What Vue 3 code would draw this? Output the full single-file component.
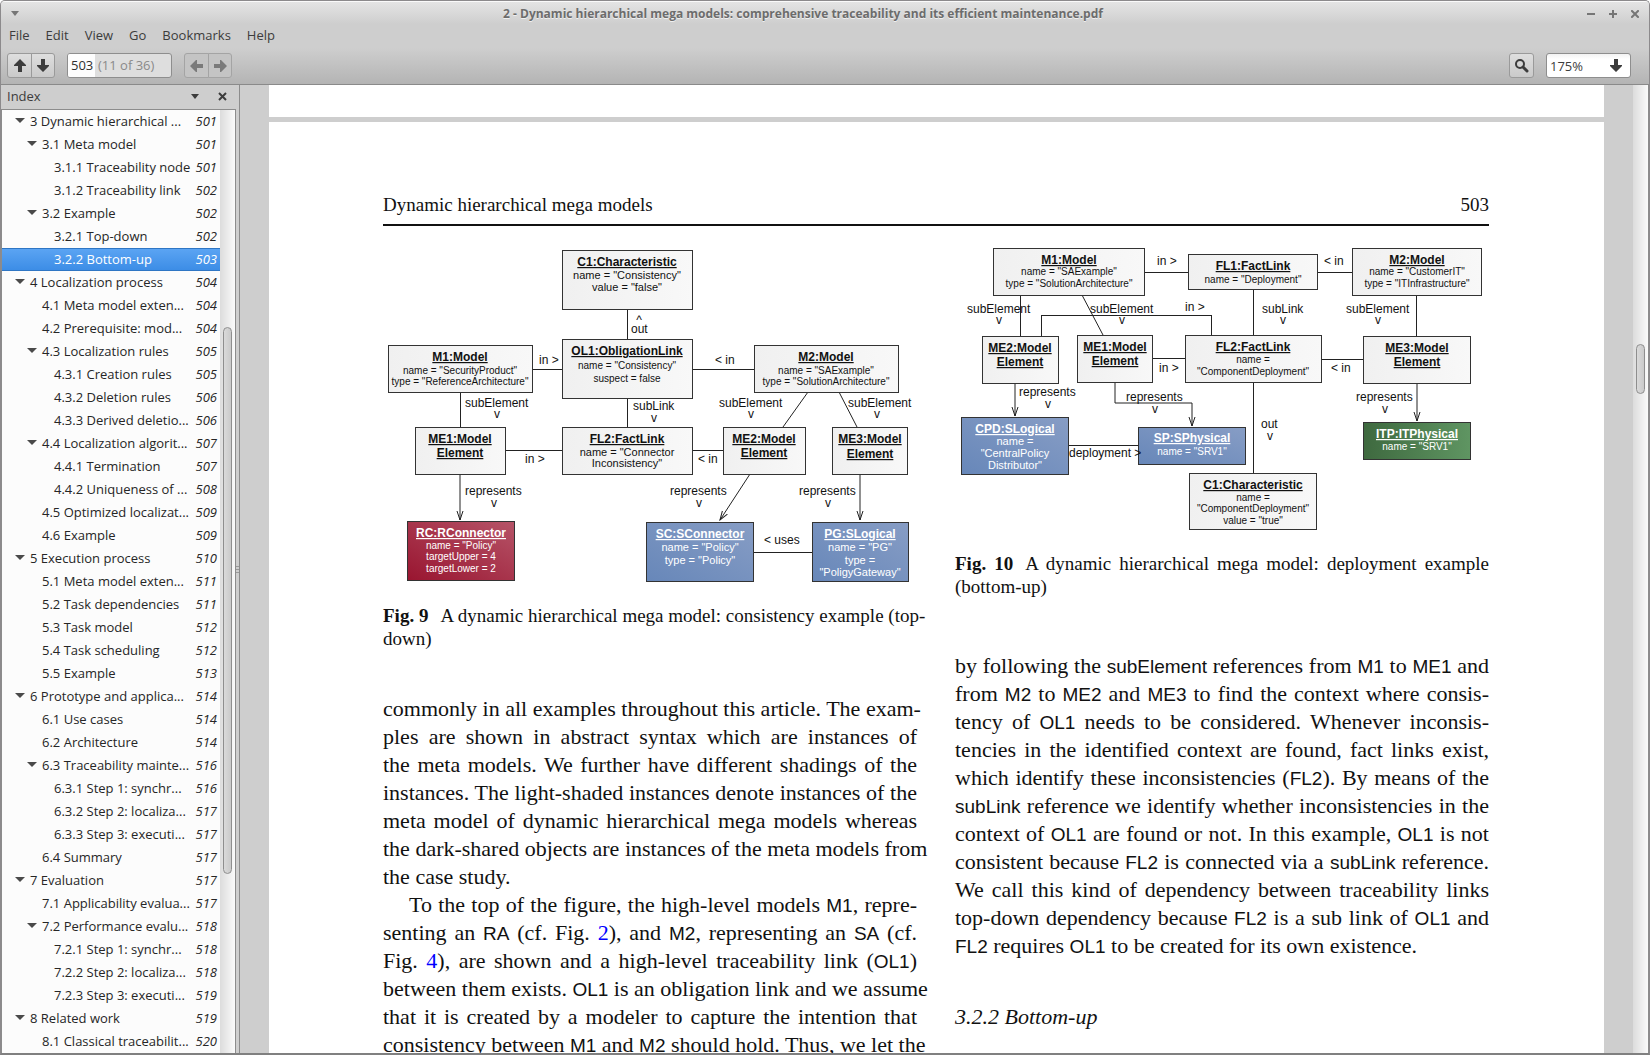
<script setup>
import { ref } from 'vue'

const menus = ['File', 'Edit', 'View', 'Go', 'Bookmarks', 'Help']
const pageNumber = ref('503')
const zoom = ref('175%')

// [depth, title, page, has children]
const outline = [
  [1, '3 Dynamic hierarchical ...', 501, true],
  [2, '3.1 Meta model', 501, true],
  [3, '3.1.1 Traceability node', 501],
  [3, '3.1.2 Traceability link', 502],
  [2, '3.2 Example', 502, true],
  [3, '3.2.1 Top-down', 502],
  [3, '3.2.2 Bottom-up', 503],
  [1, '4 Localization process', 504, true],
  [2, '4.1 Meta model exten...', 504],
  [2, '4.2 Prerequisite: mod...', 504],
  [2, '4.3 Localization rules', 505, true],
  [3, '4.3.1 Creation rules', 505],
  [3, '4.3.2 Deletion rules', 506],
  [3, '4.3.3 Derived deletio...', 506],
  [2, '4.4 Localization algorit...', 507, true],
  [3, '4.4.1 Termination', 507],
  [3, '4.4.2 Uniqueness of ...', 508],
  [2, '4.5 Optimized localizat...', 509],
  [2, '4.6 Example', 509],
  [1, '5 Execution process', 510, true],
  [2, '5.1 Meta model exten...', 511],
  [2, '5.2 Task dependencies', 511],
  [2, '5.3 Task model', 512],
  [2, '5.4 Task scheduling', 512],
  [2, '5.5 Example', 513],
  [1, '6 Prototype and applica...', 514, true],
  [2, '6.1 Use cases', 514],
  [2, '6.2 Architecture', 514],
  [2, '6.3 Traceability mainte...', 516, true],
  [3, '6.3.1 Step 1: synchr...', 516],
  [3, '6.3.2 Step 2: localiza...', 517],
  [3, '6.3.3 Step 3: executi...', 517],
  [2, '6.4 Summary', 517],
  [1, '7 Evaluation', 517, true],
  [2, '7.1 Applicability evalua...', 517],
  [2, '7.2 Performance evalu...', 518, true],
  [3, '7.2.1 Step 1: synchr...', 518],
  [3, '7.2.2 Step 2: localiza...', 518],
  [3, '7.2.3 Step 3: executi...', 519],
  [1, '8 Related work', 519, true],
  [2, '8.1 Classical traceabilit...', 520],
].map(([depth, title, page, open]) => ({ depth, title, page, open }))
const selected = ref('3.2.2 Bottom-up')

// `x` marks a model name, [x] a cross reference
const parse = (line) =>
  line
    .split(/(`[^`]+`|\[[^\]]+\])/)
    .filter(Boolean)
    .map((s) =>
      s[0] === '`' ? { kind: 'code', text: s.slice(1, -1) }
      : s[0] === '[' ? { kind: 'ref', text: s.slice(1, -1) }
      : { kind: 'text', text: s })

const leftParagraphs = [
  [
    'commonly in all examples throughout this article. The exam-',
    'ples are shown in abstract syntax which are instances of',
    'the meta models. We further have different shadings of the',
    'instances. The light-shaded instances denote instances of the',
    'meta model of dynamic hierarchical mega models whereas',
    'the dark-shared objects are instances of the meta models from',
    'the case study.',
  ],
  [
    'To the top of the figure, the high-level models `M1`, repre-',
    'senting an `RA` (cf. Fig. [2]), and `M2`, representing an `SA` (cf.',
    'Fig. [4]), are shown and a high-level traceability link (`OL1`)',
    'between them exists. `OL1` is an obligation link and we assume',
    'that it is created by a modeler to capture the intention that',
    'consistency between `M1` and `M2` should hold. Thus, we let the',
  ],
].map((p) => p.map(parse))

const rightParagraphs = [
  [
    'by following the `subElement` references from `M1` to `ME1` and',
    'from `M2` to `ME2` and `ME3` to find the context where consis-',
    'tency of `OL1` needs to be considered. Whenever inconsis-',
    'tencies in the identified context are found, fact links exist,',
    'which identify these inconsistencies (`FL2`). By means of the',
    '`subLink` reference we identify whether inconsistencies in the',
    'context of `OL1` are found or not. In this example, `OL1` is not',
    'consistent because `FL2` is connected via a `subLink` reference.',
    'We call this kind of dependency between traceability links',
    'top-down dependency because `FL2` is a sub link of `OL1` and',
    '`FL2` requires `OL1` to be created for its own existence.',
  ],
].map((p) => p.map(parse))

// node: x, y, w, h, tone, attribute size, titles [text, y], attributes [text, y]
const node = (x, y, w, h, tone, size, titles, attrs = []) => ({ x, y, w, h, tone, size, titles, attrs, cx: x + Math.round(w / 2) })

const figures = [
  {
    id: 'fig9',
    title: 'Consistency example',
    height: 340,
    nodes: [
      node(179, 5, 130, 59, 'light', 'm', [['C1:Characteristic', 21]], [['name = "Consistency"', 34], ['value = "false"', 46]]),
      node(179, 94, 130, 59, 'light', 's', [['OL1:ObligationLink', 110]], [['name = "Consistency"', 124], ['suspect = false', 137]]),
      node(5, 100, 144, 47, 'light', 's', [['M1:Model', 116]], [['name = "SecurityProduct"', 129], ['type = "ReferenceArchitecture"', 140]]),
      node(371, 100, 144, 47, 'light', 's', [['M2:Model', 116]], [['name = "SAExample"', 129], ['type = "SolutionArchitecture"', 140]]),
      node(32, 182, 90, 47, 'light', 's', [['ME1:Model', 198], ['Element', 212]]),
      node(179, 182, 130, 47, 'light', 'm', [['FL2:FactLink', 198]], [['name = "Connector', 211], ['Inconsistency"', 222]]),
      node(340, 182, 82, 47, 'light', 's', [['ME2:Model', 198], ['Element', 212]]),
      node(449, 182, 75, 47, 'light', 's', [['ME3:Model', 198], ['Element', 213]]),
      node(24, 276, 107, 59, 'red', 's', [['RC:RConnector', 292]], [['name = "Policy"', 304], ['targetUpper = 4', 315], ['targetLower = 2', 327]]),
      node(263, 277, 107, 59, 'blue', 'm', [['SC:SConnector', 293]], [['name = "Policy"', 306], ['type = "Policy"', 319]]),
      node(429, 277, 96, 59, 'blue', 'm', [['PG:SLogical', 293]], [['name = "PG"', 306], ['type =', 319], ['"PoligyGateway"', 331]]),
    ],
    straight: [
      '244,64 244,94', '244,153 244,182', '149,124 179,124', '309,124 371,124', '77,147 77,182',
      '122,205 179,205', '309,205 340,205', '370,307 429,307',
    ],
    slanted: ['425,147 400,182', '456,147 474,182'],
    arrows: ['77,229 77,275', '367,229 337,275', '477,229 477,275'],
    labels: [
      ['out', 248, 88], ['in >', 156, 119], ['subElement', 82, 162], ['subLink', 250, 165], ['< in', 332, 119],
      ['subElement', 336, 162], ['subElement', 465, 162], ['in >', 142, 218], ['< in', 315, 218],
      ['represents', 82, 250], ['represents', 287, 250], ['represents', 416, 250], ['< uses', 381, 299],
    ],
    marks: [['^', 256, 79], ['v', 114, 173], ['v', 271, 177], ['v', 368, 173], ['v', 494, 173], ['v', 111, 262], ['v', 316, 262], ['v', 445, 262]],
  },
  {
    id: 'fig10',
    title: 'Deployment example',
    height: 288,
    nodes: [
      node(38, 3, 151, 47, 'light', 's', [['M1:Model', 19]], [['name = "SAExample"', 30], ['type = "SolutionArchitecture"', 42]]),
      node(233, 9, 129, 35, 'light', 's', [['FL1:FactLink', 25]], [['name = "Deployment"', 38]]),
      node(397, 3, 129, 47, 'light', 's', [['M2:Model', 19]], [['name = "CustomerIT"', 30], ['type = "ITInfrastructure"', 42]]),
      node(27, 91, 76, 47, 'light', 's', [['ME2:Model', 107], ['Element', 121]]),
      node(122, 90, 75, 47, 'light', 's', [['ME1:Model', 106], ['Element', 120]]),
      node(230, 90, 136, 47, 'light', 's', [['FL2:FactLink', 106]], [['name =', 118], ['"ComponentDeployment"', 130]]),
      node(408, 91, 107, 47, 'light', 's', [['ME3:Model', 107], ['Element', 121]]),
      node(6, 172, 107, 57, 'blue', 'm', [['CPD:SLogical', 188]], [['name =', 200], ['"CentralPolicy', 212], ['Distributor"', 224]]),
      node(183, 182, 107, 37, 'blue', 's', [['SP:SPhysical', 197]], [['name = "SRV1"', 210]]),
      node(408, 177, 107, 37, 'green', 's', [['ITP:ITPhysical', 193]], [['name = "SRV1"', 205]]),
      node(234, 228, 127, 56, 'light', 's', [['C1:Characteristic', 244]], [['name =', 256], ['"ComponentDeployment"', 267], ['value = "true"', 279]]),
    ],
    straight: [
      '189,27 233,27', '362,27 397,27', '65,50 65,91', '86,91 86,70 256,70 256,90', '298,44 298,90',
      '197,113 230,113', '366,114 408,114', '461,50 461,91', '113,200 183,200', '298,137 298,228',
    ],
    slanted: ['127,50 148,90'],
    arrows: ['60,138 60,171', '160,137 160,158 237,158 237,181', '462,138 462,176'],
    labels: [
      ['in >', 202, 20], ['< in', 369, 20], ['subElement', 12, 68], ['subElement', 135, 68], ['in >', 230, 66],
      ['subLink', 307, 68], ['subElement', 391, 68], ['in >', 204, 127], ['< in', 376, 127], ['represents', 64, 151],
      ['represents', 171, 156], ['represents', 401, 156], ['out', 306, 183], ['deployment >', 114, 212],
    ],
    marks: [['v', 44, 79], ['v', 167, 79], ['v', 328, 79], ['v', 423, 79], ['v', 93, 163], ['v', 200, 168], ['v', 430, 168], ['v', 315, 195]],
  },
]

const columns = [
  { figure: figures[0], paragraphs: leftParagraphs, number: 'Fig. 9', caption: ['A dynamic hierarchical mega model: consistency example (top-', 'down)'], side: 'left' },
  { figure: figures[1], paragraphs: rightParagraphs, number: 'Fig. 10', caption: ['A dynamic hierarchical mega model: deployment example', '(bottom-up)'], side: 'right', heading: '3.2.2 Bottom-up' },
]
</script>

<template>
  <div class="window">
    <header class="chrome">
      <div class="titlebar">
        <button class="plain window-menu" aria-label="Window menu">
          <svg width="8" height="5" viewBox="0 0 8 5"><path d="M0 0h8L4 5z" /></svg>
        </button>
        <h1>2 - Dynamic hierarchical mega models: comprehensive traceability and its efficient maintenance.pdf</h1>
        <div class="window-buttons">
          <button class="plain" aria-label="Minimize"><svg width="8" height="8" viewBox="0 0 8 8"><path d="M0 3h8v2H0z" /></svg></button>
          <button class="plain" aria-label="Maximize"><svg width="8" height="8" viewBox="0 0 8 8"><path d="M0 3h3V0h2v3h3v2H5v3H3V5H0z" /></svg></button>
          <button class="plain" aria-label="Close"><svg width="8" height="8" viewBox="0 0 8 8"><path d="M1 1l6 6M7 1L1 7" stroke="currentColor" stroke-width="2" stroke-linecap="square" /></svg></button>
        </div>
      </div>

      <nav class="menubar" aria-label="Menu bar">
        <button v-for="m in menus" :key="m" class="plain">{{ m }}</button>
      </nav>

      <div class="toolbar">
        <div class="pair">
          <button class="tool" aria-label="Previous page">
            <svg width="12" height="13" viewBox="0 0 12 13"><path d="M6 0l6 6v1H8v6H4V7H0V6z" /></svg>
          </button>
          <button class="tool" aria-label="Next page">
            <svg width="12" height="13" viewBox="0 0 12 13"><path d="M6 13l6-6V6H8V0H4v6H0v1z" /></svg>
          </button>
        </div>
        <label class="page-field">
          <input v-model="pageNumber" aria-label="Page" />
          <span>(11 of 36)</span>
        </label>
        <div class="pair muted">
          <button class="tool" aria-label="Back">
            <svg width="13" height="12" viewBox="0 0 13 12"><path d="M0 6l6-6h1v4h6v4H7v4H6z" /></svg>
          </button>
          <button class="tool" aria-label="Forward">
            <svg width="13" height="12" viewBox="0 0 13 12"><path d="M13 6L7 0H6v4H0v4h6v4h1z" /></svg>
          </button>
        </div>
        <button class="tool search" aria-label="Find">
          <svg width="15" height="15" viewBox="0 0 15 15" fill="none" stroke="currentColor"><circle cx="6" cy="6" r="4" fill="none" stroke-width="2" /><path d="M9 9l4 4" stroke-width="3" stroke-linecap="round" /></svg>
        </button>
        <div class="zoom">
          <select v-model="zoom" aria-label="Zoom"><option>175%</option></select>
          <svg width="12" height="13" viewBox="0 0 12 13"><path d="M6 13l6-6V6H8V0H4v6H0v1z" /></svg>
        </div>
      </div>
    </header>

    <main class="body">
      <aside class="sidebar">
        <div class="side-head">
          <span>Index</span>
          <button class="plain" aria-label="Choose pane"><svg width="8" height="5" viewBox="0 0 8 5"><path d="M0 0h8L4 5z" /></svg></button>
          <button class="plain" aria-label="Close pane"><svg width="9" height="9" viewBox="0 0 9 9"><path d="M1 1l7 7M8 1L1 8" stroke="currentColor" stroke-width="2" /></svg></button>
        </div>
        <div class="tree-frame">
          <ul class="tree">
            <li v-for="o in outline" :key="o.title" :class="['depth-' + o.depth, { selected: o.title === selected }]">
              <svg class="expander" :class="{ leaf: !o.open }" width="10" height="5" viewBox="0 0 10 5"><path d="M0 0h10L5 5z" /></svg>
              <a href="#" @click.prevent="selected = o.title">{{ o.title }}</a>
              <em>{{ o.page }}</em>
            </li>
          </ul>
          <div class="track side-track"><i class="thumb"></i></div>
        </div>
      </aside>
      <div class="splitter"><i></i><i></i><i></i></div>

      <section class="viewer">
        <div class="pages">
          <div class="sheet previous"></div>
          <article class="sheet current">
            <div class="running-head"><span>Dynamic hierarchical mega models</span><span>503</span></div>
            <div class="columns">
              <div v-for="c in columns" :key="c.side" :class="['column', c.side]">
                <figure>
                  <svg class="diagram" :viewBox="'0 0 534 ' + c.figure.height" role="img" :aria-label="c.figure.title">
                    <defs>
                      <linearGradient :id="c.figure.id + 'light'" x1="0" y1="0" x2="1" y2="0"><stop offset="0" stop-color="#f0f0f0" /><stop offset="1" stop-color="#f8f8f8" /></linearGradient>
                      <linearGradient :id="c.figure.id + 'blue'" x1="0" y1="1" x2="1" y2="0"><stop offset="0" stop-color="#6787b9" /><stop offset="1" stop-color="#879dc5" /></linearGradient>
                      <linearGradient :id="c.figure.id + 'red'" x1="0" y1="1" x2="1" y2="0"><stop offset="0" stop-color="#991530" /><stop offset="1" stop-color="#b65468" /></linearGradient>
                      <linearGradient :id="c.figure.id + 'green'" x1="0" y1="0" x2="1" y2="0"><stop offset="0" stop-color="#3e693f" /><stop offset="1" stop-color="#5f9562" /></linearGradient>
                      <marker :id="c.figure.id + 'arrow'" markerWidth="10" markerHeight="8" refX="9" refY="4" orient="auto" markerUnits="userSpaceOnUse"><path d="M0 1l9 3-9 3" class="edge" /></marker>
                    </defs>
                    <polyline v-for="l in c.figure.straight" :key="l" :points="l" class="edge crisp" />
                    <polyline v-for="l in c.figure.slanted" :key="l" :points="l" class="edge" />
                    <polyline v-for="l in c.figure.arrows" :key="l" :points="l" class="edge" :marker-end="'url(#' + c.figure.id + 'arrow)'" />
                    <g v-for="n in c.figure.nodes" :key="n.titles[0][0]" :class="['node', n.tone, n.size]">
                      <rect :x="n.x" :y="n.y" :width="n.w" :height="n.h" :fill="'url(#' + c.figure.id + n.tone + ')'" />
                      <text v-for="t in n.titles" :key="t[0]" class="node-title" :x="n.cx" :y="t[1]">{{ t[0] }}</text>
                      <text v-for="t in n.attrs" :key="t[0]" class="node-attr" :x="n.cx" :y="t[1]">{{ t[0] }}</text>
                    </g>
                    <text v-for="(l, i) in c.figure.labels" :key="i" class="edge-label" :x="l[1]" :y="l[2]">{{ l[0] }}</text>
                    <text v-for="(m, i) in c.figure.marks" :key="'m' + i" class="edge-label mark" :x="m[1]" :y="m[2]">{{ m[0] }}</text>
                  </svg>
                  <figcaption>
                    <span class="line"><b>{{ c.number }}</b>{{ c.caption[0] }}</span>
                    <span class="line">{{ c.caption[1] }}</span>
                  </figcaption>
                </figure>
                <div class="prose">
                  <p v-for="(p, i) in c.paragraphs" :key="i" :class="{ indented: i > 0 }">
                    <span v-for="(line, j) in p" :key="j" class="line"><template v-for="(s, k) in line" :key="k"><code v-if="s.kind === 'code'">{{ s.text }}</code><a v-else-if="s.kind === 'ref'" href="#">{{ s.text }}</a><template v-else>{{ s.text }}</template></template></span>
                  </p>
                </div>
                <h2 v-if="c.heading">{{ c.heading }}</h2>
              </div>
            </div>
          </article>
        </div>
        <div class="track view-track"><i class="thumb"></i></div>
      </section>
    </main>
  </div>
</template>

<style>
body { margin: 0; background: #fff; }
</style>

<style scoped>
* { box-sizing: border-box; }
.window {
  display: flex;
  flex-direction: column;
  height: 100vh;
  overflow: hidden;
  border: 1px solid #8c8a8c;
  border-bottom: 2px solid #808080;
  border-radius: 5px 5px 0 0;
  background: #cecece;
  font: 13px/18px "Open Sans", "Noto Sans", sans-serif;
  color: #3c3c3c;
}
button, input, select { font: inherit; color: inherit; }
svg { display: block; fill: currentColor; }
.plain { border: 0; padding: 0; background: none; }

.chrome {
  flex: none;
  border-top: 1px solid #fafafa;
  border-bottom: 1px solid #8a8a8a;
  background: linear-gradient(#e4e4e4, #cecece 22px, #cecece 46px, #b4b4b4);
}
.titlebar { display: flex; align-items: center; height: 23px; padding: 0 10px; color: #767676; }
.titlebar h1 {
  flex: 1;
  margin: 0;
  text-align: center;
  white-space: nowrap;
  font: bold 12px/18px "Open Sans", "Noto Sans", sans-serif;
  color: #6c6c6c;
  text-shadow: 0 1px 0 #f0f0f0;
}
.window-buttons { display: flex; gap: 14px; }
.menubar { display: flex; align-items: flex-start; gap: 16px; height: 24px; padding: 1px 8px 0; }
.toolbar { display: flex; align-items: center; height: 35px; padding: 0 18px 2px 6px; }
.pair { display: flex; }
.tool {
  display: grid;
  place-items: center;
  width: 25px;
  height: 25px;
  padding: 0;
  border: 1px solid #9a9a9a;
  border-radius: 3px;
  background: linear-gradient(#dedede, #cacaca);
  color: #3c3c3c;
}
.pair .tool:first-child { border-radius: 3px 0 0 3px; }
.pair .tool:last-child { margin-left: -1px; width: 24px; border-radius: 0 3px 3px 0; }
.muted .tool { background: #c4c4c4; color: #7a7a7a; border-color: #a4a4a4; }
.page-field {
  display: flex;
  width: 105px;
  height: 25px;
  margin: 0 12px;
  border: 1px solid #8e8e8e;
  border-radius: 3px;
  background: #dedede;
  line-height: 23px;
  color: #8a8a8a;
  overflow: hidden;
}
.page-field input { width: 27px; padding: 0 0 0 3px; border: 0; background: #fdfdfd; color: #303030; }
.page-field span { padding-left: 3px; white-space: nowrap; }
.search { margin-left: auto; }
.zoom { position: relative; margin-left: 12px; }
.zoom select {
  width: 85px;
  height: 25px;
  padding: 0 3px;
  border: 1px solid #8e8e8e;
  border-radius: 3px;
  background: linear-gradient(#f2f2f2, #fff 5px);
  appearance: none;
}
.zoom svg { position: absolute; right: 9px; top: 6px; pointer-events: none; }

.body { display: flex; flex: 1; min-height: 0; }
.sidebar { display: flex; flex-direction: column; width: 235px; flex: none; }
.side-head { display: flex; align-items: center; flex: none; height: 24px; padding: 0 9px 2px 6px; }
.side-head span { flex: 1; }
.side-head button + button { margin-left: 19px; }
.tree-frame { display: flex; flex: 1; min-height: 0; border: 1px solid #8c8c8c; border-bottom: 0; background: #fcfcfc; }
.tree { flex: 1; min-width: 0; margin: 0; padding: 0; list-style: none; overflow: hidden; color: #262626; }
.tree li { display: flex; align-items: center; height: 23px; padding-right: 3px; padding-bottom: 2px; white-space: nowrap; }
.tree .expander { flex: none; margin-right: 5px; color: #4a4a4a; }
.tree .leaf { visibility: hidden; }
.depth-1 { padding-left: 13px; }
.depth-2 { padding-left: 25px; }
.depth-3 { padding-left: 37px; }
.tree a { flex: 1; color: inherit; text-decoration: none; }
.tree .selected { border: solid #2f76c4; border-width: 1px 0; background: linear-gradient(#5ba4f3, #3c8de6); color: #fff; }
.track { display: flex; flex-direction: column; align-items: center; flex: none; width: 15px; background: linear-gradient(90deg, #dcdcdc, #fafafa); }
.thumb { width: 9px; border: 1px solid #8e8e8e; border-radius: 5px; background: linear-gradient(90deg, #dadada, #cacaca); }
.side-track .thumb { margin-top: 217px; height: 58%; }
.view-track .thumb { margin-top: 259px; height: 50px; }
.splitter { display: flex; flex-direction: column; justify-content: center; gap: 2px; flex: none; width: 4px; border-right: 1px solid #8c8c8c; }
.splitter i { height: 1px; background: #9a9a9a; }

.viewer { display: flex; flex: 1; min-width: 0; border-right: 1px solid #8c8c8c; }
.pages { display: flex; flex-direction: column; gap: 5px; flex: 1; min-width: 0; padding: 0 29px; overflow: hidden; }
.sheet { background: #fff; }
.previous { flex: none; height: 32px; }
.current { flex: none; padding: 71px 115px 0 114px; font-family: "Liberation Serif", serif; color: #111; }
.running-head { display: flex; justify-content: space-between; padding-bottom: 7px; border-bottom: 2px solid #111; font-size: 19px; line-height: 24px; }
.columns { display: grid; grid-template-columns: 1fr 1fr; gap: 38px; margin-top: 19px; }
.column { min-width: 0; }
figure { margin: 0; }
.diagram { width: 100%; height: auto; overflow: visible; }
figcaption { margin-top: 19px; font-size: 19px; line-height: 23px; }
figcaption b { margin-right: 12px; }
.line { display: block; white-space: nowrap; text-align: justify; text-align-last: justify; }
.line:last-child { text-align-last: left; }
.left .prose { margin-top: 45px; }
.right .prose { margin-top: 54px; }
.prose { font-size: 22px; line-height: 28px; }
.prose p { margin: 0; }
.indented .line:first-child { padding-left: 26px; }
.indented .line:last-child { text-align-last: justify; }
.prose code { font: 19px/1 "Liberation Sans", sans-serif; }
.prose a { color: #00f; text-decoration: none; }
h2 { margin: 43px 0 0; font-size: 22px; line-height: 28px; font-weight: normal; font-style: italic; }

.edge { fill: none; stroke: #222; stroke-width: 1px; }
.crisp, .node rect { shape-rendering: crispEdges; }
.node rect { stroke: #333; }
.diagram text { font-family: "Liberation Sans", sans-serif; fill: #111; }
.node text { text-anchor: middle; }
.diagram .node-title { font-size: 12px; font-weight: bold; text-decoration: underline; }
.diagram .node-attr { font-size: 10px; }
.diagram .m .node-attr { font-size: 11px; }
.diagram .red text, .diagram .blue text, .diagram .green text { fill: #fff; }
.diagram .edge-label { font-size: 12px; }
.mark { text-anchor: middle; }
</style>
